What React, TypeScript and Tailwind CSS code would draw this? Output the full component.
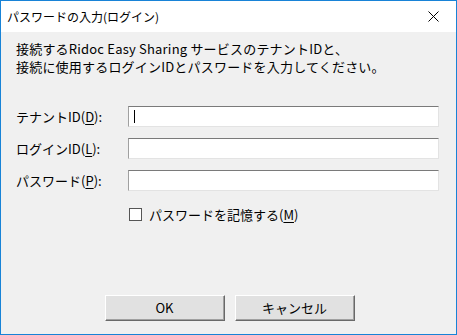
import React from 'react';

const font = { fontFamily: '"Noto Sans CJK JP", "Liberation Sans", sans-serif' };

function U({ children }: { children: React.ReactNode }) {
  return <span className="underline underline-offset-2">{children}</span>;
}

function Field({ label, caret }: { label: React.ReactNode; caret?: boolean }) {
  return (
    <div className="flex h-[21px] items-center">
      <div className="w-[112px] text-[13px] leading-none text-black">{label}</div>
      <div className="relative h-[21px] w-[311px] border border-t-[#7a7a7a] border-l-[#a0a0a0] border-r-[#e3e3e3] border-b-[#e3e3e3] bg-white">
        {caret ? <div className="absolute left-[5px] top-[3px] h-[13px] w-px bg-black" /> : null}
      </div>
    </div>
  );
}

function Button({ children }: { children: React.ReactNode }) {
  return (
    <div className="flex h-[26px] w-[120px] items-center justify-center border border-t-[#ffffff] border-l-[#ffffff] border-r-[#696969] border-b-[#696969] bg-[#e1e1e1] text-[13px] text-black shadow-[inset_-1px_-1px_0_#a0a0a0]">
      {children}
    </div>
  );
}

export default function App() {
  return (
    <div className="flex h-[335px] w-[457px] flex-col border border-[#1883d7] bg-[#f0f0f0]" style={font}>
      <div className="flex h-[31px] shrink-0 items-center justify-between bg-white pl-[6px] pr-[17px]">
        <span className="text-[12px] text-[#000]">パスワードの入力(ログイン)</span>
        <svg width="11" height="11" viewBox="0 0 11 11">
          <path d="M0.5 0.5 L10.5 10.5 M10.5 0.5 L0.5 10.5" stroke="#000" strokeWidth="1" />
        </svg>
      </div>
      <div className="flex flex-1 flex-col px-[15px]">
        <div className="mt-[8px] text-[13px] leading-[18px] tracking-[0.2px] text-black">
          <div>接続するRidoc Easy Sharing サービスのテナントIDと、</div>
          <div>接続に使用するログインIDとパスワードを入力してください。</div>
        </div>
        <div className="mt-[30px] flex flex-col gap-[11px]">
          <Field label={<>テナントID(<U>D</U>):</>} caret />
          <Field label={<>ログインID(<U>L</U>):</>} />
          <Field label={<>パスワード(<U>P</U>):</>} />
        </div>
        <div className="mt-[17px] flex items-center gap-[7px] pl-[113px]">
          <div className="h-[13px] w-[13px] border border-[#555] bg-white" />
          <span className="text-[13px] leading-none text-black">
            パスワードを記憶する(<U>M</U>)
          </span>
        </div>
        <div className="mt-auto mb-[13px] flex justify-center gap-[10px] pl-[2px]">
          <Button>OK</Button>
          <Button>キャンセル</Button>
        </div>
      </div>
    </div>
  );
}
